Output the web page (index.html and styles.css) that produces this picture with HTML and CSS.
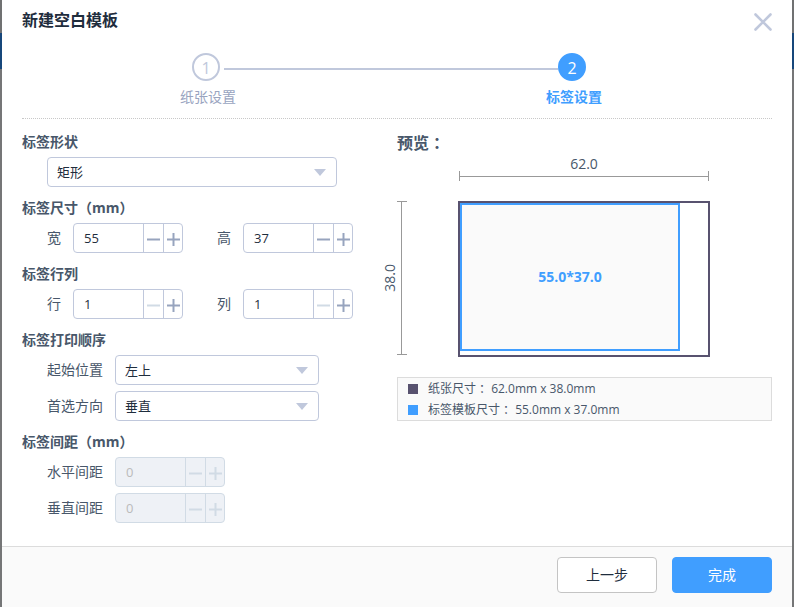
FILE: index.html
```html
<!DOCTYPE html>
<html lang="zh-CN">
<head>
<meta charset="utf-8">
<meta name="viewport" content="width=device-width, initial-scale=1">
<title>新建空白模板</title>
<link rel="stylesheet" href="styles.css">
</head>
<body>
<main class="dialog">
  <header class="dialog-header">
    <h1 class="dialog-title">新建空白模板</h1>
    <button class="close" type="button" aria-label="关闭">
      <svg width="18" height="18" viewBox="0 0 18 18"><path d="M1.5 1.5l15 15M16.5 1.5l-15 15" fill="none" stroke="#c0c8dc" stroke-width="2.6" stroke-linecap="round"/></svg>
    </button>
  </header>

  <ol class="steps">
    <li class="step"><span class="step-number">1</span><span class="step-label">纸张设置</span></li>
    <li class="step-line" role="presentation"></li>
    <li class="step step-active"><span class="step-number">2</span><span class="step-label">标签设置</span></li>
  </ol>

  <div class="content">
    <form class="settings">
      <section class="group">
        <h2 class="group-title"><label for="shape">标签形状</label></h2>
        <div class="row">
          <span class="select select-wide"><select id="shape"><option>矩形</option></select></span>
        </div>
      </section>

      <section class="group">
        <h2 class="group-title">标签尺寸（mm）</h2>
        <div class="row row-pair">
          <div class="field">
            <label for="w">宽</label>
            <span class="stepper"><input id="w" type="text" inputmode="decimal" value="55"><button type="button" aria-label="减少宽"><svg viewBox="0 0 13 13"><path d="M0 6.500H13"/></svg></button><button type="button" aria-label="增加宽"><svg viewBox="0 0 13 13"><path d="M0 6.500H13M6.500 0V13"/></svg></button></span>
          </div>
          <div class="field">
            <label for="h">高</label>
            <span class="stepper"><input id="h" type="text" inputmode="decimal" value="37"><button type="button" aria-label="减少高"><svg viewBox="0 0 13 13"><path d="M0 6.500H13"/></svg></button><button type="button" aria-label="增加高"><svg viewBox="0 0 13 13"><path d="M0 6.500H13M6.500 0V13"/></svg></button></span>
          </div>
        </div>
      </section>

      <section class="group">
        <h2 class="group-title">标签行列</h2>
        <div class="row row-pair">
          <div class="field">
            <label for="rows">行</label>
            <span class="stepper"><input id="rows" type="text" inputmode="numeric" value="1"><button type="button" disabled aria-label="减少行"><svg viewBox="0 0 13 13"><path d="M0 6.500H13"/></svg></button><button type="button" aria-label="增加行"><svg viewBox="0 0 13 13"><path d="M0 6.500H13M6.500 0V13"/></svg></button></span>
          </div>
          <div class="field">
            <label for="cols">列</label>
            <span class="stepper"><input id="cols" type="text" inputmode="numeric" value="1"><button type="button" disabled aria-label="减少列"><svg viewBox="0 0 13 13"><path d="M0 6.500H13"/></svg></button><button type="button" aria-label="增加列"><svg viewBox="0 0 13 13"><path d="M0 6.500H13M6.500 0V13"/></svg></button></span>
          </div>
        </div>
      </section>

      <section class="group">
        <h2 class="group-title">标签打印顺序</h2>
        <div class="row field">
          <label for="start">起始位置</label>
          <span class="select"><select id="start"><option>左上</option></select></span>
        </div>
        <div class="row field">
          <label for="direction">首选方向</label>
          <span class="select"><select id="direction"><option>垂直</option></select></span>
        </div>
      </section>

      <section class="group">
        <h2 class="group-title">标签间距（mm）</h2>
        <div class="row field">
          <label for="gap-x">水平间距</label>
          <span class="stepper stepper-disabled"><input id="gap-x" type="text" value="0" disabled><button type="button" disabled aria-label="减少水平间距"><svg viewBox="0 0 13 13"><path d="M0 6.500H13"/></svg></button><button type="button" disabled aria-label="增加水平间距"><svg viewBox="0 0 13 13"><path d="M0 6.500H13M6.500 0V13"/></svg></button></span>
        </div>
        <div class="row field">
          <label for="gap-y">垂直间距</label>
          <span class="stepper stepper-disabled"><input id="gap-y" type="text" value="0" disabled><button type="button" disabled aria-label="减少垂直间距"><svg viewBox="0 0 13 13"><path d="M0 6.500H13"/></svg></button><button type="button" disabled aria-label="增加垂直间距"><svg viewBox="0 0 13 13"><path d="M0 6.500H13M6.500 0V13"/></svg></button></span>
        </div>
      </section>
    </form>

    <section class="preview">
      <h2 class="preview-title">预览<span class="colon" lang="zh-TW">：</span></h2>
      <div class="canvas">
        <div class="measure-x">
          <span class="measure-text">62.0</span>
          <div class="ruler-x"></div>
        </div>
        <div class="measure-y">
          <span class="measure-text">38.0</span>
          <div class="ruler-y"></div>
        </div>
        <div class="paper"><div class="label">55.0*37.0</div></div>
      </div>
      <ul class="legend">
        <li><span class="swatch swatch-paper"></span>纸张尺寸<span class="colon" lang="zh-TW">：</span> 62.0mm x 38.0mm</li>
        <li><span class="swatch swatch-label"></span>标签模板尺寸<span class="colon" lang="zh-TW">：</span> 55.0mm x 37.0mm</li>
      </ul>
    </section>
  </div>

  <footer class="dialog-footer">
    <button class="button" type="button">上一步</button>
    <button class="button button-primary" type="button">完成</button>
  </footer>
</main>
</body>
</html>
```

FILE: styles.css
```css
* {
  box-sizing: border-box;
}

body {
  margin: 0;
  padding: 0 2px;
  min-height: 100vh;
  background: linear-gradient(#707172 33px, #17477b 33px, #17477b 69px, #757677 69px);
  color: #48576a;
  font: 14px/20px "Open Sans", "Noto Sans CJK SC", sans-serif;
}

h1,
h2,
ol,
ul {
  margin: 0;
  padding: 0;
  list-style: none;
}

button,
input,
select {
  margin: 0;
  font: inherit;
  color: inherit;
}

.dialog {
  display: flex;
  flex-direction: column;
  min-height: 100vh;
  background: #fff;
}

.dialog-header {
  display: flex;
  justify-content: space-between;
  align-items: flex-start;
  padding: 10px 20px 0;
}

.dialog-title {
  color: #1f2d3d;
  font-size: 16px;
  line-height: 20px;
}

.close {
  display: flex;
  padding: 3px 0 0;
  border: 0;
  background: none;
}

/* Steps */

.steps {
  display: flex;
  margin: 22px 20px 0;
  padding: 0 170px 11px 158px;
  border-bottom: 1px dotted #c8c8c8;
  color: #99a4bf;
}

.step {
  display: flex;
  flex-direction: column;
  gap: 6px;
}

.step-number {
  width: 28px;
  height: 28px;
  margin-left: 12px;
  border: 2px solid #c0c8dc;
  border-radius: 50%;
  color: #c0c8dc;
  font-size: 16px;
  line-height: 26px;
  text-align: center;
}

.step-line {
  flex: 1;
  height: 2px;
  margin: 15px -12px 0;
  background: #c0c8dc;
}

.step-active {
  color: #409eff;
  font-weight: bold;
}

.step-active .step-number {
  border-color: #409eff;
  background: #409eff;
  color: #fff;
  font-weight: normal;
}

/* Settings */

.content {
  display: grid;
  grid-template-columns: 1fr 1fr;
  flex: 1;
  padding: 8px 20px 23px;
}

.settings {
  display: flex;
  flex-direction: column;
  gap: 6px;
}

.group-title {
  font-size: 14px;
  line-height: 30px;
}

.row {
  margin-left: 25px;
}

.row + .row {
  margin-top: 6px;
}

.row-pair {
  display: flex;
  gap: 34px;
}

.field {
  display: flex;
  align-items: center;
  gap: 12px;
}

.select {
  position: relative;
  display: block;
  width: 204px;
}

.select-wide {
  width: 290px;
}

.select::after {
  content: "";
  position: absolute;
  top: 12px;
  right: 11px;
  border: 6px solid transparent;
  border-top: 7px solid #c0c8dc;
  border-bottom: 0;
  pointer-events: none;
}

.select select {
  display: block;
  width: 100%;
  height: 30px;
  padding: 0 30px 0 9px;
  border: 1px solid #c0c8dc;
  border-radius: 4px;
  background: #fff;
  color: #1f2d3d;
  font-size: 13px;
  appearance: none;
}

.stepper {
  display: flex;
  width: 110px;
  height: 30px;
  border: 1px solid #c0c8dc;
  border-radius: 4px;
  overflow: hidden;
}

.stepper input {
  flex: 1;
  min-width: 0;
  padding: 0 10px;
  border: 0;
  background: none;
  color: #1f2d3d;
  font-size: 13px;
}

.stepper button {
  display: flex;
  align-items: center;
  justify-content: center;
  width: 20px;
  padding: 3px 0 0;
  border: 0;
  border-left: 1px solid #c0c8dc;
  background: none;
  color: #97a4be;
}

.stepper button:last-child {
  width: 19px;
}

.stepper svg {
  flex: none;
  width: 13px;
  height: 13px;
  fill: none;
  stroke: currentColor;
  stroke-width: 2;
}

.stepper button:disabled {
  color: #d1dbe5;
}

.stepper-disabled {
  border-color: #d1dbe5;
  background: #eef1f6;
}

.stepper-disabled button {
  border-color: #d1dbe5;
}

.stepper-disabled input {
  color: #bbb;
}

/* Preview */

.colon {
  font-family: "Noto Sans CJK TC", sans-serif;
  line-height: 1;
}

.preview-title {
  padding-top: 2px;
  font-size: 16px;
  line-height: 28px;
}

.canvas {
  display: grid;
  grid-template-columns: 61px 252px;
  row-gap: 20px;
}

.measure-x {
  grid-column: 2;
  padding: 0 1px;
  line-height: 14px;
  text-align: center;
}

.measure-text {
  display: block;
}

.ruler-x {
  height: 10px;
  border: solid #999;
  border-width: 0 1px;
  background: linear-gradient(#999, #999) center / 100% 1px no-repeat;
}

.measure-y {
  display: flex;
  align-items: center;
  margin: 0 0 2px -14px;
  line-height: 14px;
}

.measure-y .measure-text {
  width: 14px;
  writing-mode: vertical-rl;
  transform: rotate(180deg);
}

.ruler-y {
  align-self: stretch;
  width: 10px;
  border: solid #999;
  border-width: 1px 0;
  background: linear-gradient(#999, #999) 4px 0 / 1px 100% no-repeat;
}

.paper {
  height: 156px;
  border: 2px solid #58526f;
}

.label {
  display: flex;
  align-items: center;
  justify-content: center;
  width: 220px;
  height: 148px;
  border: 2px solid #409eff;
  background: #fafafa;
  color: #409eff;
  font-weight: bold;
}

.legend {
  margin-top: 20px;
  border: 1px solid #dcdcdc;
  background: #fafafa;
  font-size: 12px;
  line-height: 21px;
}

.legend li {
  display: flex;
  align-items: center;
  padding-left: 10px;
  white-space: pre;
}

.swatch {
  width: 10px;
  height: 10px;
  margin-right: 10px;
}

.swatch-paper {
  background: #58526f;
}

.swatch-label {
  background: #409eff;
}

/* Footer */

.dialog-footer {
  display: flex;
  justify-content: flex-end;
  gap: 15px;
  padding: 10px 20px 14px;
  border-top: 1px solid #dcdcdc;
  background: #fafafa;
}

.button {
  width: 100px;
  height: 36px;
  padding: 0;
  border: 1px solid #c4c4c4;
  border-radius: 4px;
  background: #fff;
  color: #1f2d3d;
}

.button-primary {
  border-color: #409eff;
  background: #409eff;
  color: #fff;
}
```
